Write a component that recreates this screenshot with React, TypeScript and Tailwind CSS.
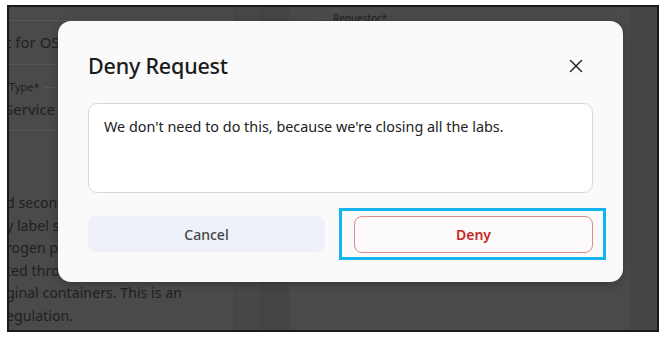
import { X } from 'lucide-react'

const LEFT_LINES = ['d second', 'y label s', 'rogen p', 'ted thro', 'ginal containers. This is an', 'egulation.']

function Backdrop() {
  return (
    <div className="flex h-full w-full bg-[#4a4a4a] text-[#1f1f1f] overflow-hidden">
      <div className="w-[226px] shrink-0 flex flex-col border-r border-[#444]">
        <div className="h-[14px] border-b border-[#565656]" />
        <div className="h-[44px] border-b border-[#565656] flex items-center text-[15px] -ml-[3px]">t for OS</div>
        <div className="h-[66px] border-b border-[#565656] relative">
          <div className="absolute left-0 top-[14px] text-[11px] flex items-center gap-1 w-[140px]">
            <span>Type*</span>
            <span className="h-px flex-1 bg-[#565656]" />
          </div>
          <div className="absolute left-[-4px] top-[33px] text-[15px]">Service</div>
        </div>
        <div className="pt-[61px] text-[14.2px] leading-[22.5px] -ml-[3px] whitespace-nowrap">
          {LEFT_LINES.map((l, i) => <div key={i}>{l}</div>)}
        </div>
      </div>
      <div className="w-[25px] shrink-0 bg-[#474747]" />
      <div className="w-[29px] shrink-0 bg-[#444444]" />
      <div className="w-[341px] shrink-0 relative">
        <div className="absolute left-[26px] top-[4px] flex items-center gap-1 text-[10px]">
          <span className="w-[14px] h-px bg-[#565656]" />
          <span>Requestor*</span>
        </div>
      </div>
      <div className="flex-1 bg-[#454545]" />
    </div>
  )
}

export default function App() {
  return (
    <div className="relative w-[670px] h-[339px] bg-white" style={{ fontFamily: '"Noto Sans", "Open Sans", sans-serif' }}>
      <div className="absolute left-[7px] top-[5px] w-[652px] h-[327px] border-2 border-[#1a1a1a] overflow-hidden">
        <Backdrop />
      </div>

      <div className="absolute left-[58px] top-[21px] w-[565px] h-[261px] rounded-[13px] bg-[#fafafa] px-[30px] pt-[28px] shadow-[0_2px_8px_rgba(0,0,0,0.25)]">
        <div className="flex items-center justify-between h-[34px]">
          <h2 className="text-[21.5px] font-medium text-[#1b1b1b] tracking-[-0.2px]">Deny Request</h2>
          <button className="w-[24px] h-[24px] flex items-center justify-center text-[#222] mr-[5px]">
            <X size={22} strokeWidth={1.5} />
          </button>
        </div>
        <div className="mt-[20px] h-[90px] rounded-[9px] border border-[#d9d9d9] bg-white px-[15px] pt-[12px] text-[14.4px] text-[#222]">
          We don't need to do this, because we're closing all the labs.
        </div>
        <div className="mt-[23px] flex gap-[29px]">
          <button className="w-[237px] h-[36px] rounded-[8px] bg-[#eef1fa] text-[14px] font-medium text-[#444]">Cancel</button>
          <button className="w-[239px] h-[37px] rounded-[8px] border border-[#e08a8a] bg-[#fcfafa] text-[14px] font-semibold text-[#c62828]">Deny</button>
        </div>
      </div>

      <div className="absolute left-[339px] top-[208px] w-[267px] h-[52px] border-[3px] border-[#12b4ec]" />
    </div>
  )
}
